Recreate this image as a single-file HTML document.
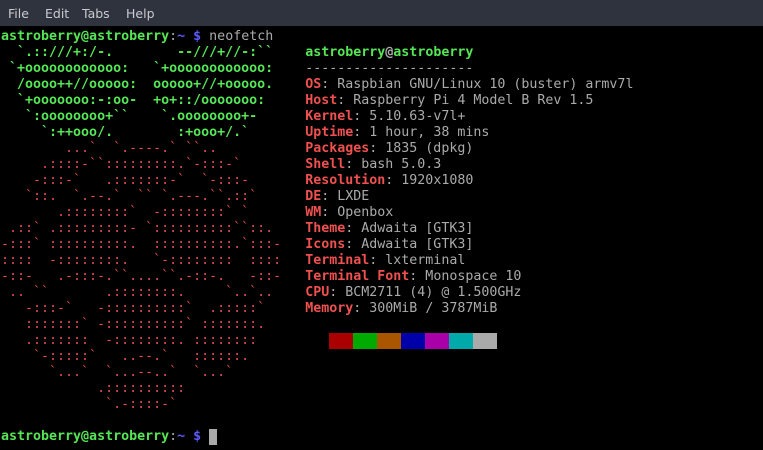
<!DOCTYPE html>
<html><head><meta charset="utf-8"><style>
html,body{margin:0;padding:0;background:#000;width:763px;height:450px;overflow:hidden}
#menu{position:absolute;left:0;top:0;width:763px;height:26px;background:#2f333d;font-family:"DejaVu Sans","Liberation Sans",sans-serif;font-size:12.5px;color:#c8cbd0}
#menu span{position:absolute;top:6px}
pre{position:absolute;left:1px;top:29px;margin:0;font-family:"DejaVu Sans Mono","Liberation Mono",monospace;font-size:13.3px;line-height:16px;color:#aaaaaa}
.g{color:#55e655;font-weight:bold}
.r{color:#e04848}
.R{color:#ef5050;font-weight:bold}
.b{color:#5a5aff;font-weight:bold}
.blk{display:inline-block;width:24px;height:16px;vertical-align:top}
.cur{display:inline-block;width:8px;height:16px;background:#aaa;vertical-align:top}
</style></head><body>
<div id="menu"><span style="left:8px">File</span><span style="left:45px">Edit</span><span style="left:82px">Tabs</span><span style="left:126px">Help</span></div>
<pre><span class="g">astroberry@astroberry</span>:<span class="b">~ $</span> neofetch
<span class="g">  `.::///+:/-.        --///+//-:``    </span><span class="g">astroberry</span><span style="color:#aaa;font-weight:bold">@</span><span class="g">astroberry</span>
<span class="g"> `+oooooooooooo:   `+oooooooooooo:    </span>---------------------
<span class="g">  /oooo++//ooooo:  ooooo+//+ooooo.    </span><span class="R">OS</span>: Raspbian GNU/Linux 10 (buster) armv7l
<span class="g">  `+ooooooo:-:oo-  +o+::/ooooooo:     </span><span class="R">Host</span>: Raspberry Pi 4 Model B Rev 1.5
<span class="g">   `:oooooooo+``    `.oooooooo+-      </span><span class="R">Kernel</span>: 5.10.63-v7l+
<span class="g">     `:++ooo/.        :+ooo+/.`       </span><span class="R">Uptime</span>: 1 hour, 38 mins
<span class="r">        ...`  `.----.` ``..           </span><span class="R">Packages</span>: 1835 (dpkg)
<span class="r">     .::::-``:::::::::.`-:::-`        </span><span class="R">Shell</span>: bash 5.0.3
<span class="r">    -:::-`   .:::::::-`  `-:::-       </span><span class="R">Resolution</span>: 1920x1080
<span class="r">   `::.  `.--.`  `` `.---.``.::`      </span><span class="R">DE</span>: LXDE
<span class="r">       .::::::::`  -::::::::` `       </span><span class="R">WM</span>: Openbox
<span class="r"> .::` .:::::::::- `::::::::::``::.    </span><span class="R">Theme</span>: Adwaita [GTK3]
<span class="r">-:::` ::::::::::.  ::::::::::.`:::-   </span><span class="R">Icons</span>: Adwaita [GTK3]
<span class="r">::::  -::::::::.   `-::::::::  ::::   </span><span class="R">Terminal</span>: lxterminal
<span class="r">-::-   .-:::-.``....``.-::-.   -::-   </span><span class="R">Terminal Font</span>: Monospace 10
<span class="r"> .. ``       .::::::::.     `..`..    </span><span class="R">CPU</span>: BCM2711 (4) @ 1.500GHz
<span class="r">   -:::-`   -::::::::::`  .:::::`     </span><span class="R">Memory</span>: 300MiB / 3787MiB
<span class="r">   :::::::` -::::::::::` :::::::.     </span>
<span class="r">   .:::::::  -::::::::. ::::::::      </span><span class="blk" style="background:#000"></span><span class="blk" style="background:#aa0000"></span><span class="blk" style="background:#00aa00"></span><span class="blk" style="background:#aa5500"></span><span class="blk" style="background:#0000aa"></span><span class="blk" style="background:#aa00aa"></span><span class="blk" style="background:#00aaaa"></span><span class="blk" style="background:#aaaaaa"></span>
<span class="r">    `-:::::`   ..--.`   ::::::.       </span>
<span class="r">      `...`  `...--..`  `...`         </span>
<span class="r">            .::::::::::               </span>
<span class="r">             `.-::::-`                </span>

<span class="g">astroberry@astroberry</span>:<span class="b">~ $</span> <span class="cur"></span></pre>
</body></html>
